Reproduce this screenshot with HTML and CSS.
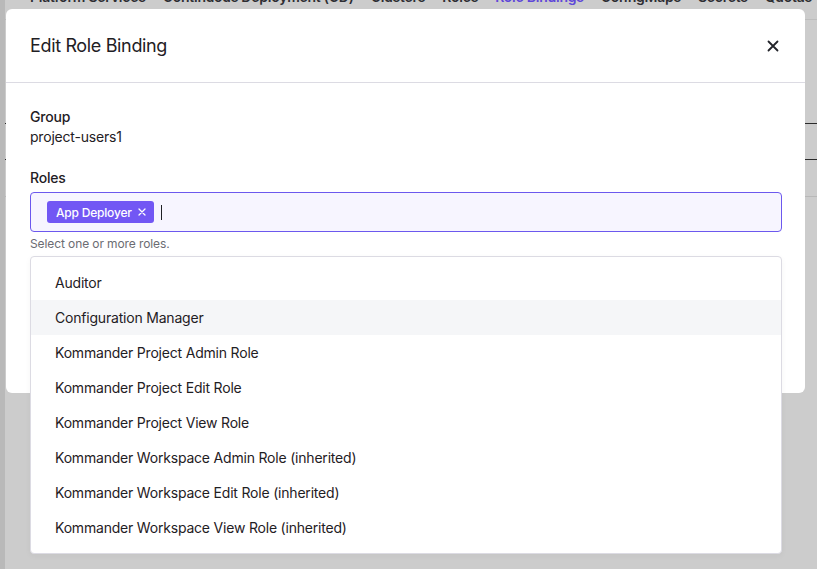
FILE: index.html
```html
<!DOCTYPE html>
<html lang="en">
<head>
<meta charset="utf-8">
<title>Edit Role Binding</title>
<link rel="stylesheet" href="styles.css">
</head>
<body>
<div class="page">
  <div class="side"></div>
  <div class="main">
    <nav class="tabs">
      <span class="tab">Platform Services</span>
      <span class="tab">Continuous Deployment (CD)</span>
      <span class="tab">Clusters</span>
      <span class="tab">Roles</span>
      <span class="tab active">Role Bindings</span>
      <span class="tab">ConfigMaps</span>
      <span class="tab">Secrets</span>
      <span class="tab">Quotas</span>
    </nav>
    <div class="table">
      <div class="trow first"></div>
      <div class="trow dark"></div>
      <div class="trow light"></div>
    </div>
  </div>
</div>

<div class="modal" role="dialog" aria-labelledby="mtitle">
  <header class="modal-header">
    <h2 id="mtitle" class="modal-title">Edit Role Binding</h2>
    <button class="close" aria-label="Close">
      <svg width="12" height="12" viewBox="0 0 12 12"><path d="M1.5 1.5 L10.5 10.5 M10.5 1.5 L1.5 10.5" stroke="#23242a" stroke-width="1.8" stroke-linecap="round"/></svg>
    </button>
  </header>
  <div class="modal-body">
    <div class="field">
      <div class="label">Group</div>
      <div class="value">project-users1</div>
    </div>
    <div class="field roles">
      <div class="label">Roles</div>
      <div class="combo">
        <span class="chip">App Deployer
          <svg class="chip-x" width="8" height="8" viewBox="0 0 8 8"><path d="M1 1 L7 7 M7 1 L1 7" stroke="#fff" stroke-width="1.3" stroke-linecap="round"/></svg>
        </span>
        <span class="caret"></span>
      </div>
      <div class="help">Select one or more roles.</div>
      <ul class="menu">
        <li class="opt">Auditor</li>
        <li class="opt hl">Configuration Manager</li>
        <li class="opt">Kommander Project Admin Role</li>
        <li class="opt">Kommander Project Edit Role</li>
        <li class="opt">Kommander Project View Role</li>
        <li class="opt">Kommander Workspace Admin Role (inherited)</li>
        <li class="opt">Kommander Workspace Edit Role (inherited)</li>
        <li class="opt">Kommander Workspace View Role (inherited)</li>
      </ul>
    </div>
  </div>
</div>
</body>
</html>
```

FILE: styles.css
```css
* { box-sizing: border-box; }
html, body { margin: 0; padding: 0; }
body {
  width: 817px;
  height: 569px;
  overflow: hidden;
  background: #cccccc;
  font-family: Inter, "Noto Sans", "Liberation Sans", sans-serif;
  color: #1f2024;
  position: relative;
}
.page {
  display: flex;
  height: 569px;
}
.side {
  width: 5px;
  flex: none;
  background: #b9b9b9;
}
.main {
  flex: 1;
  display: flex;
  flex-direction: column;
}
.tabs {
  display: flex;
  gap: 17px;
  padding-left: 25px;
  padding-bottom: 12px;
  margin-top: -13px;
  font-size: 14px;
  font-weight: 600;
  line-height: 20px;
  letter-spacing: -0.25px;
  white-space: nowrap;
  color: #2e2e33;
  border-bottom: 1px solid #bdbdbd;
}
.tab.active { color: #5f48d9; }
.table {
  display: flex;
  flex-direction: column;
}
.trow.first { height: 104px; border-bottom: 1px solid #2a2a2a; }
.trow.dark { height: 36px; border-bottom: 1px solid #2a2a2a; }
.trow.light { height: 37px; border-bottom: 1px solid #b8b8b8; }

.modal {
  position: absolute;
  left: 6px;
  top: 9px;
  width: 799px;
  height: 384px;
  background: #ffffff;
  border-radius: 6px;
}
.modal-header {
  height: 74px;
  display: flex;
  align-items: center;
  justify-content: space-between;
  padding: 0 24px 0 24px;
  border-bottom: 1px solid #dcdbe3;
}
.modal-title {
  margin: 0;
  font-size: 18px;
  font-weight: 400;
  line-height: 24px;
  color: #1f2024;
  letter-spacing: -0.35px;
}
.close {
  border: 0;
  background: none;
  padding: 0;
  width: 12px;
  height: 12px;
  display: flex;
  margin-right: 2px;
}
.modal-body {
  padding: 24px 24px 0 24px;
}
.label {
  font-size: 14px;
  font-weight: 500;
  line-height: 20px;
  letter-spacing: -0.2px;
}
.value {
  font-size: 14px;
  line-height: 20px;
  letter-spacing: -0.2px;
}
.field.roles {
  margin-top: 21px;
  position: relative;
}
.combo {
  margin-top: 4px;
  height: 40px;
  width: 752px;
  border: 1px solid #6c58ee;
  border-radius: 4px;
  background: #f7f5ff;
  display: flex;
  align-items: center;
  padding-left: 16px;
  gap: 7px;
}
.chip {
  display: inline-flex;
  align-items: center;
  gap: 6px;
  height: 22px;
  padding: 0 8px 0 9px;
  background: #7257f4;
  color: #ffffff;
  font-size: 12px;
  font-weight: 500;
  letter-spacing: -0.2px;
  border-radius: 3px;
}
.caret {
  width: 1px;
  height: 15px;
  background: #1f2024;
}
.help {
  margin-top: 4px;
  font-size: 12px;
  line-height: 16px;
  color: #6b6c72;
  letter-spacing: -0.1px;
}
.menu {
  position: absolute;
  left: 0;
  top: 88px;
  width: 752px;
  margin: 0;
  padding: 8px 0;
  list-style: none;
  background: #ffffff;
  border: 1px solid #dcdbe3;
  border-radius: 4px;
  box-shadow: 0 2px 6px rgba(0,0,0,0.04);
}
.opt {
  height: 35px;
  display: flex;
  align-items: center;
  padding-left: 24px;
  font-size: 14px;
  letter-spacing: -0.2px;
  color: #1f2024;
}
.opt.hl { background: #f5f6f8; }
```
